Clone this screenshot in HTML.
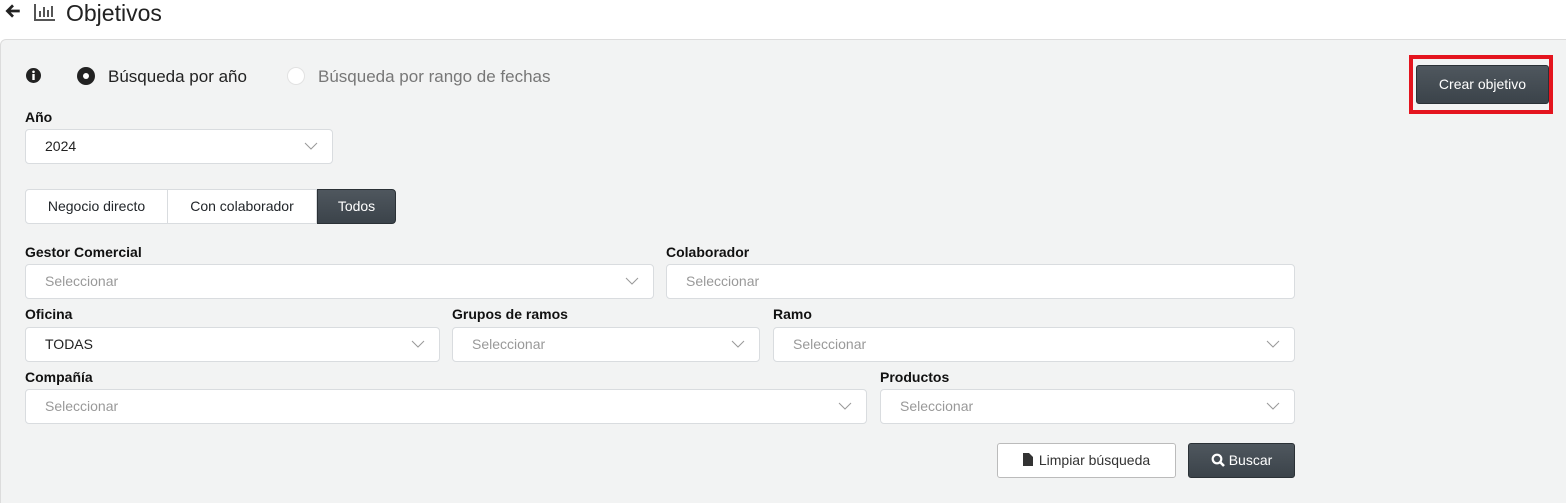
<!DOCTYPE html>
<html><head><meta charset="utf-8"><style>
*{box-sizing:border-box;margin:0;padding:0}
html,body{width:1566px;height:503px;overflow:hidden}
body{background:#fff;font-family:"Liberation Sans",Arial,sans-serif;position:relative;color:#212529}
.a{position:absolute}
.panel{left:0;top:39px;width:1580px;height:470px;background:#f2f3f3;border:1px solid #dcdcdc;border-radius:6px}
.lbl{font-size:14px;font-weight:bold;color:#111}
.sel{background:#fff;border:1px solid #d9dcdf;border-radius:4px;height:35px;font-size:14px;color:#999;padding:0 19px;line-height:33px}
.sel.v{color:#222}
.sel svg{position:absolute;right:14px;top:12px}
.btn{border-radius:3px;font-size:14px;text-align:center}
.dark{background:linear-gradient(#4f575e,#3b434a);border:1px solid #2b3136;color:#fff}
</style></head><body>
<div class="a" style="left:4px;top:2px">
<svg width="18" height="18" viewBox="0 0 16 16"><path d="M14 8H3M8 3L3 8l5 5" stroke="#222" stroke-width="2.4" fill="none"/></svg></div>
<svg class="a" style="left:33px;top:2px" width="24" height="20" viewBox="0 0 24 20"><path d="M2 2v16h20" stroke="#555" stroke-width="2" fill="none"/><rect x="6" y="9" width="2" height="6" fill="#555"/><rect x="10" y="5" width="2" height="10" fill="#555"/><rect x="14" y="8" width="2" height="7" fill="#555"/><rect x="18" y="4" width="2" height="11" fill="#555"/></svg>
<div class="a" style="left:66px;top:0px;font-size:23px;color:#222">Objetivos</div>
<div class="a panel"></div>
<svg class="a" style="left:26px;top:68px" width="15" height="15"><circle cx="7.5" cy="7.5" r="7.5" fill="#222"/><rect x="6.3" y="6" width="2.4" height="6" fill="#fff"/><circle cx="7.5" cy="3.8" r="1.3" fill="#fff"/></svg>
<svg class="a" style="left:77px;top:67px" width="18" height="18"><circle cx="9" cy="9" r="9" fill="#222"/><circle cx="9" cy="9" r="3" fill="#fff"/></svg>
<div class="a" style="left:108px;top:67px;font-size:17px;color:#222">Búsqueda por año</div>
<svg class="a" style="left:287px;top:67px" width="18" height="18"><circle cx="9" cy="9" r="8.5" fill="#fff" stroke="#e2e2e2"/></svg>
<div class="a" style="left:318px;top:67px;font-size:17px;color:#777">Búsqueda por rango de fechas</div>
<div class="a" style="left:1409px;top:55px;width:144px;height:59px;border:4px solid #e4141e"></div>
<div class="a btn dark" style="left:1416px;top:65px;width:133px;height:39px;line-height:37px">Crear objetivo</div>
<div class="a lbl" style="left:25px;top:109px">Año</div>
<div class="a sel v" style="left:25px;top:129px;width:308px">2024<svg width="14" height="8"><path d="M1 1l6 6 6-6" stroke="#999" fill="none"/></svg></div>
<div class="a" style="left:25px;top:189px;width:371px;height:35px;display:flex;font-size:14px;line-height:33px">
<div style="width:143px;background:#fff;border:1px solid #d9dcdf;border-radius:4px 0 0 4px;text-align:center">Negocio directo</div>
<div style="width:149px;background:#fff;border:1px solid #d9dcdf;border-left:0;text-align:center">Con colaborador</div>
<div class="dark" style="width:79px;border-radius:0 4px 4px 0;text-align:center">Todos</div></div>
<div class="a lbl" style="left:25px;top:244px">Gestor Comercial</div>
<div class="a sel" style="left:25px;top:264px;width:629px">Seleccionar<svg width="14" height="8"><path d="M1 1l6 6 6-6" stroke="#999" fill="none"/></svg></div>
<div class="a lbl" style="left:666px;top:244px">Colaborador</div>
<div class="a sel" style="left:666px;top:264px;width:629px">Seleccionar</div>
<div class="a lbl" style="left:25px;top:306px">Oficina</div>
<div class="a sel v" style="left:25px;top:327px;width:415px">TODAS<svg width="14" height="8"><path d="M1 1l6 6 6-6" stroke="#999" fill="none"/></svg></div>
<div class="a lbl" style="left:452px;top:306px">Grupos de ramos</div>
<div class="a sel" style="left:452px;top:327px;width:308px">Seleccionar<svg width="14" height="8"><path d="M1 1l6 6 6-6" stroke="#999" fill="none"/></svg></div>
<div class="a lbl" style="left:773px;top:306px">Ramo</div>
<div class="a sel" style="left:773px;top:327px;width:522px">Seleccionar<svg width="14" height="8"><path d="M1 1l6 6 6-6" stroke="#999" fill="none"/></svg></div>
<div class="a lbl" style="left:25px;top:369px">Compañía</div>
<div class="a sel" style="left:25px;top:389px;width:842px">Seleccionar<svg width="14" height="8"><path d="M1 1l6 6 6-6" stroke="#999" fill="none"/></svg></div>
<div class="a lbl" style="left:880px;top:369px">Productos</div>
<div class="a sel" style="left:880px;top:389px;width:415px">Seleccionar<svg width="14" height="8"><path d="M1 1l6 6 6-6" stroke="#999" fill="none"/></svg></div>
<div class="a btn" style="left:997px;top:443px;width:179px;height:35px;line-height:33px;background:#fff;border:1px solid #bbb;color:#333"><svg width="10" height="13" style="vertical-align:-1px;margin-right:6px"><path d="M0 0h6l4 4v9H0z" fill="#333"/></svg>Limpiar búsqueda</div>
<div class="a btn dark" style="left:1188px;top:443px;width:107px;height:35px;line-height:33px"><svg width="14" height="14" style="vertical-align:-2px;margin-right:4px"><circle cx="6" cy="6" r="4.3" stroke="#fff" stroke-width="2.2" fill="none"/><path d="M9 9l4 4" stroke="#fff" stroke-width="2.6"/></svg>Buscar</div>
</body></html>
